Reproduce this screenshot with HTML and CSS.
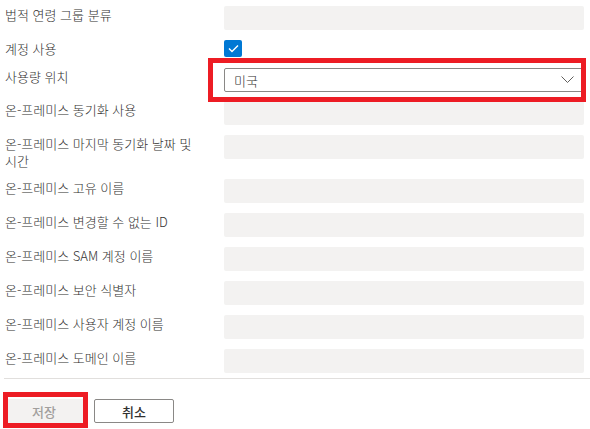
FILE: index.html
```html
<!DOCTYPE html>
<html lang="ko">
<head>
<meta charset="utf-8">
<link rel="stylesheet" href="styles.css">
</head>
<body>
<div class="page">
  <div class="form">
    <div class="label">법적 연령 그룹 분류</div>
    <div class="field"></div>

    <div class="label">계정 사용</div>
    <div class="check-cell">
      <span class="checkbox">
        <svg width="11" height="9" viewBox="0 0 11 9"><polyline points="1,4.5 4,7.5 10,1.5" fill="none" stroke="#fff" stroke-width="1.4"/></svg>
      </span>
    </div>

    <div class="label">사용량 위치</div>
    <div class="dropdown">
      <span class="dropdown-text">미국</span>
      <svg class="chevron" width="13" height="7" viewBox="0 0 13 7"><polyline points="0.5,0.5 6.5,6.5 12.5,0.5" fill="none" stroke="#605e5c" stroke-width="1"/></svg>
    </div>

    <div class="label">온-프레미스 동기화 사용</div>
    <div class="field"></div>

    <div class="label">온-프레미스 마지막 동기화 날짜 및 시간</div>
    <div class="field"></div>

    <div class="label">온-프레미스 고유 이름</div>
    <div class="field"></div>

    <div class="label">온-프레미스 변경할 수 없는 ID</div>
    <div class="field"></div>

    <div class="label">온-프레미스 SAM 계정 이름</div>
    <div class="field"></div>

    <div class="label">온-프레미스 보안 식별자</div>
    <div class="field"></div>

    <div class="label">온-프레미스 사용자 계정 이름</div>
    <div class="field"></div>

    <div class="label">온-프레미스 도메인 이름</div>
    <div class="field"></div>
  </div>
  <div class="footer">
    <button class="btn btn-disabled">저장</button>
    <button class="btn btn-default">취소</button>
  </div>
</div>
<div class="highlight highlight-dropdown"></div>
<div class="highlight highlight-save"></div>
</body>
</html>
```

FILE: styles.css
```css
html, body {
  margin: 0;
  padding: 0;
  background: #ffffff;
}
body {
  width: 590px;
  height: 429px;
  overflow: hidden;
  font-family: "Noto Sans CJK KR", "Noto Sans", sans-serif;
  font-size: 13px;
  font-weight: 300;
  color: #323130;
  position: relative;
}
.page {
  padding-top: 6px;
}
.form {
  display: grid;
  grid-template-columns: 210px 360px;
  column-gap: 9px;
  row-gap: 10px;
  padding-left: 5px;
  align-items: start;
}
.label {
  line-height: 17px;
  word-break: keep-all;
}
.field {
  height: 24px;
  background: #f3f2f1;
  border-radius: 2px;
}
.check-cell {
  height: 18px;
}
.checkbox {
  display: flex;
  align-items: center;
  justify-content: center;
  width: 18px;
  height: 17px;
  background: #0078d4;
  border-radius: 2px;
}
.dropdown {
  height: 24px;
  box-sizing: border-box;
  border: 1px solid #8a8886;
  border-radius: 2px;
  display: flex;
  align-items: center;
  justify-content: space-between;
  padding: 0 9px 0 9px;
  margin-bottom: -1px;
}
.dropdown-text {
  line-height: 17px;
}
.chevron {
  display: block;
  margin-top: -2px;
}
.footer {
  margin: 5px 0 0 4px;
  border-top: 1px solid #e1dfdd;
  padding-top: 20px;
  display: flex;
  gap: 10px;
}
.btn {
  width: 80px;
  height: 24px;
  box-sizing: border-box;
  border-radius: 2px;
  font-family: "Noto Sans CJK KR", "Noto Sans", sans-serif;
  font-size: 13px;
  font-weight: 500;
  padding: 0;
  line-height: 17px;
}
.btn-disabled {
  background: #f3f2f1;
  border: 1px solid #f3f2f1;
  color: #a19f9d;
}
.btn-default {
  background: #ffffff;
  border: 1px solid #8a8886;
  color: #323130;
}
.highlight {
  position: absolute;
  box-sizing: border-box;
  border: 5px solid #ed1c24;
}
.highlight-dropdown {
  left: 208px;
  top: 58px;
  width: 378px;
  height: 44px;
}
.highlight-save {
  left: 3px;
  top: 392px;
  width: 85px;
  height: 36px;
}
```
